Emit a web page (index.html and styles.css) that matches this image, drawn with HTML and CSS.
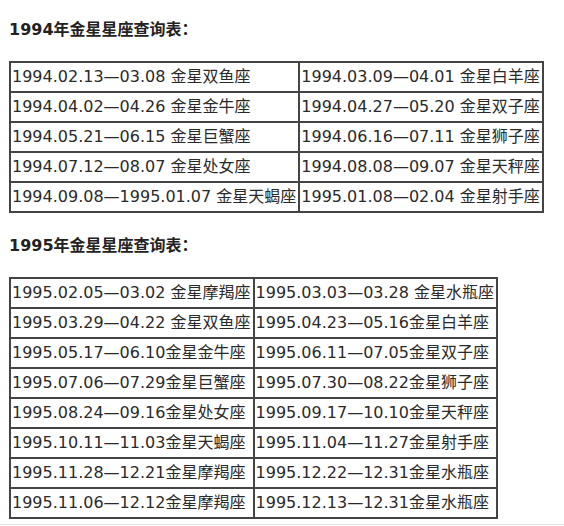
FILE: index.html
```html
<!DOCTYPE html>
<html lang="zh-CN">
<head>
<meta charset="utf-8">
<title>金星星座查询表</title>
<link rel="stylesheet" href="styles.css">
</head>
<body>
<div class="page">
  <section class="block first">
    <h2 class="title">1994年金星星座查询表：</h2>
    <table class="grid">
      <tr><td>1994.02.13—03.08 金星双鱼座</td><td>1994.03.09—04.01 金星白羊座</td></tr>
      <tr><td>1994.04.02—04.26 金星金牛座</td><td>1994.04.27—05.20 金星双子座</td></tr>
      <tr><td>1994.05.21—06.15 金星巨蟹座</td><td>1994.06.16—07.11 金星狮子座</td></tr>
      <tr><td>1994.07.12—08.07 金星处女座</td><td>1994.08.08—09.07 金星天秤座</td></tr>
      <tr><td>1994.09.08—1995.01.07 金星天蝎座</td><td>1995.01.08—02.04 金星射手座</td></tr>
    </table>
  </section>
  <section class="block">
    <h2 class="title">1995年金星星座查询表：</h2>
    <table class="grid">
      <tr><td>1995.02.05—03.02 金星摩羯座</td><td>1995.03.03—03.28 金星水瓶座</td></tr>
      <tr><td>1995.03.29—04.22 金星双鱼座</td><td>1995.04.23—05.16金星白羊座</td></tr>
      <tr><td>1995.05.17—06.10金星金牛座</td><td>1995.06.11—07.05金星双子座</td></tr>
      <tr><td>1995.07.06—07.29金星巨蟹座</td><td>1995.07.30—08.22金星狮子座</td></tr>
      <tr><td>1995.08.24—09.16金星处女座</td><td>1995.09.17—10.10金星天秤座</td></tr>
      <tr><td>1995.10.11—11.03金星天蝎座</td><td>1995.11.04—11.27金星射手座</td></tr>
      <tr><td>1995.11.28—12.21金星摩羯座</td><td>1995.12.22—12.31金星水瓶座</td></tr>
      <tr><td>1995.11.06—12.12金星摩羯座</td><td>1995.12.13—12.31金星水瓶座</td></tr>
    </table>
  </section>
  <div class="rule"></div>
</div>
</body>
</html>
```
FILE: styles.css
```css
html, body {
  margin: 0;
  padding: 0;
  background: #ffffff;
}
.page {
  font-family: "DejaVu Sans", "Noto Sans CJK SC", sans-serif;
  color: #2a2a2a;
  padding-top: 18px;
}
.block {
  padding-left: 9px;
}
.title {
  font-size: 16px;
  font-weight: bold;
  line-height: 24px;
  margin: 21px 0 19px;
  color: #222222;
}
.first .title {
  margin-top: 0;
}
.grid {
  border: 1px solid #444444;
  border-spacing: 0;
  border-collapse: separate;
}
.grid td {
  border: 1px solid #444444;
  font-size: 16px;
  line-height: 24px;
  height: 24px;
  padding: 2px 2px 2px 1px;
  white-space: nowrap;
  text-align: left;
}
.rule {
  margin-top: 5px;
  border-top: 1px solid #e3e3e3;
}
```
